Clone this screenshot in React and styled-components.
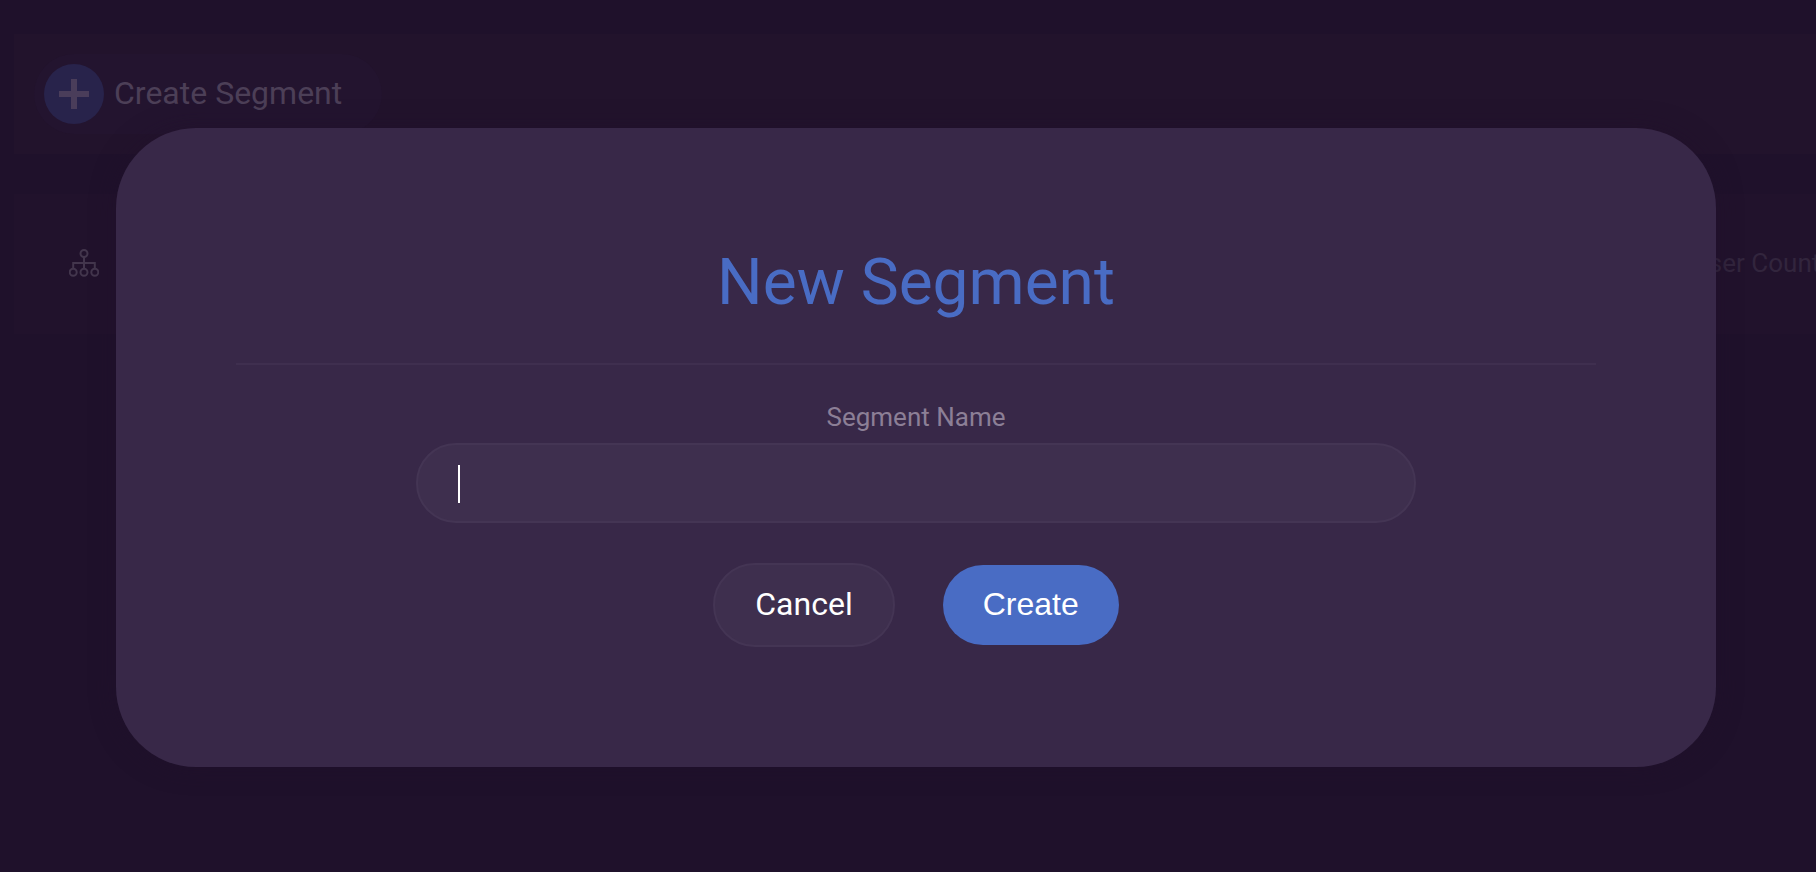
import React from "react";
import styled, { createGlobalStyle } from "styled-components";

const GlobalStyle = createGlobalStyle`
  *, *::before, *::after { box-sizing: border-box; }
  html, body, #root { min-height: 100vh; }
  body {
    margin: 0;
    background: #1f112b;
    font-family: Roboto, "Liberation Sans", sans-serif;
    -webkit-font-smoothing: antialiased;
  }
`;

const Page = styled.div`
  position: relative;
  min-height: 100vh;
  overflow: hidden;
`;

const Content = styled.main`
  display: flex;
  flex-direction: column;
  gap: 40px;
  padding: 34px 0 0 14px;
`;

const Panel = styled.section`
  display: flex;
  align-items: center;
  min-height: ${(p) => p.$height};
  padding: 0 0 0 20px;
  background: ${(p) => p.$tone};
  overflow: hidden;
`;

const AddButton = styled.button`
  display: flex;
  align-items: center;
  gap: 10px;
  height: 80px;
  padding: 0 40px 0 10px;
  border: 0;
  border-radius: 40px;
  background: #23142f;
  color: #4c3f57;
  font: 400 32px/40px Roboto, sans-serif;
`;

const ButtonText = styled.span`
  padding-bottom: 2px;
`;

const PlusBadge = styled.span`
  display: grid;
  place-items: center;
  width: 60px;
  height: 60px;
  border-radius: 50%;
  background: #28234b;
`;

const SegmentTable = styled.table`
  width: 100%;
  table-layout: fixed;
  border-collapse: collapse;
  color: #32253d;
  font-size: 26px;
  line-height: 32px;
`;

const HeadCell = styled.th`
  width: ${(p) => p.$width || "auto"};
  padding: 0 0 2px ${(p) => p.$indent || "0"};
  text-align: left;
  font-weight: 400;
  white-space: nowrap;

  svg { display: block; }
`;

const Overlay = styled.div`
  position: absolute;
  inset: 0;
  padding: 128px 100px 104px 116px;
`;

const Dialog = styled.form`
  display: flex;
  flex-direction: column;
  align-items: center;
  padding: 120px;
  border-radius: 80px;
  background: #382848;
  box-shadow: 0 0 24px rgba(31, 16, 42, 0.5);
`;

const Title = styled.h1`
  margin: 0 0 45px;
  color: #496cc4;
  font-size: 64px;
  font-weight: 400;
  line-height: 70px;
`;

const Divider = styled.hr`
  width: 100%;
  height: 2px;
  margin: 0 0 36px;
  border: 0;
  background: #3f2f4f;
`;

const Label = styled.label`
  margin-bottom: 10px;
  color: #8c7f96;
  font-size: 26px;
  line-height: 32px;
`;

const Field = styled.div`
  position: relative;
  width: 100%;
  max-width: 1000px;
  margin-bottom: 40px;
`;

const Input = styled.input`
  display: block;
  width: 100%;
  height: 80px;
  padding: 0 40px;
  border: 2px solid #443554;
  border-radius: 40px;
  outline: 0;
  background: #3e2f4e;
  color: #fff;
  caret-color: transparent;
  font: 400 32px/40px Roboto, sans-serif;
`;

const Caret = styled.span`
  position: absolute;
  top: 22px;
  left: 42px;
  width: 2px;
  height: 38px;
  background: #fff;
`;

const Actions = styled.div`
  display: flex;
  align-items: center;
  gap: 48px;
`;

const Button = styled.button`
  padding: 19px 40px 21px;
  border: ${(p) => (p.$primary ? "0" : "2px solid #443554")};
  border-radius: ${(p) => (p.$primary ? "40px" : "42px")};
  background: ${(p) => (p.$primary ? "#496cc4" : "#3e2f4e")};
  color: #fff;
  font: 400 32px/40px ${(p) => (p.$primary ? '"Liberation Sans"' : "Roboto")}, sans-serif;
`;

const PlusIcon = () => (
  <svg width="30" height="30" viewBox="0 0 30 30" aria-hidden="true">
    <path d="M12 0h6v12h12v6H18v12h-6V18H0v-6h12z" fill="#4a3d5a" />
  </svg>
);

const HierarchyIcon = () => (
  <svg width="30" height="28" viewBox="0 0 30 28" fill="none" stroke="#43364d" strokeWidth="2" aria-hidden="true">
    <circle cx="15" cy="4.5" r="3.5" />
    <circle cx="4.2" cy="23.2" r="3.5" />
    <circle cx="15" cy="23.2" r="3.5" />
    <circle cx="25.8" cy="23.2" r="3.5" />
    <path d="M15 8v11.7M4.2 19.7V14h21.6v5.7" />
  </svg>
);

export default function App() {
  return (
    <Page>
      <GlobalStyle />
      <Content>
        <Panel $height="120px" $tone="#22132c">
          <AddButton type="button">
            <PlusBadge><PlusIcon /></PlusBadge>
            <ButtonText>Create Segment</ButtonText>
          </AddButton>
        </Panel>
        <Panel $height="140px" $tone="#21122c">
          <SegmentTable>
            <thead>
              <tr>
                <HeadCell $indent="35px"><HierarchyIcon /></HeadCell>
                <HeadCell $width="124px">User Count</HeadCell>
              </tr>
            </thead>
          </SegmentTable>
        </Panel>
      </Content>
      <Overlay>
        <Dialog role="dialog" aria-labelledby="dialog-title" onSubmit={(e) => e.preventDefault()}>
          <Title id="dialog-title">New Segment</Title>
          <Divider />
          <Label htmlFor="segment-name">Segment Name</Label>
          <Field>
            <Input id="segment-name" type="text" autoComplete="off" />
            <Caret />
          </Field>
          <Actions>
            <Button type="button">Cancel</Button>
            <Button type="submit" $primary>Create</Button>
          </Actions>
        </Dialog>
      </Overlay>
    </Page>
  );
}
